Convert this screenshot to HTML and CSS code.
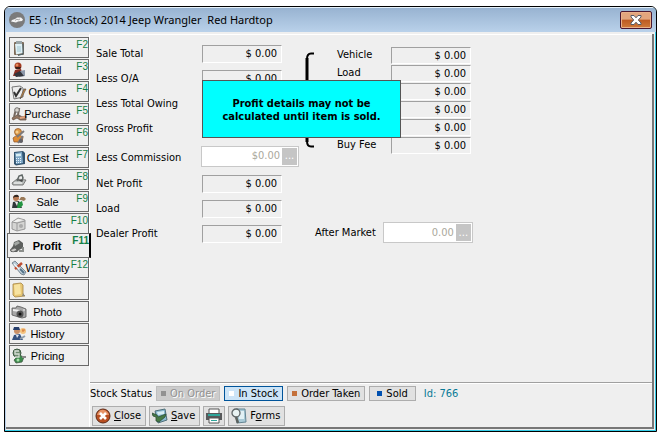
FILE: index.html
```html
<!DOCTYPE html>
<html lang="en">
<head>
<meta charset="utf-8">
<title>E5 : (In Stock) 2014 Jeep Wrangler Red Hardtop</title>
<link rel="stylesheet" href="styles.css">
</head>
<body>
<div class="window">
  <header class="titlebar">
    <svg class="logo" viewBox="0 0 16 16"><circle cx="8" cy="8" r="8" fill="#7b7b7b"/><path d="M2 9.500L3 8L6 7L8 5.500H12L14 7.500L13 9L9 9.500L7 10.500Z" fill="#f4f4f4"/><path d="M6 8.500L8 7L9 8L11 7" fill="none" stroke="#aaa"/></svg>
    <h1>E5 : (In Stock) 2014 Jeep Wrangler&nbsp; Red Hardtop</h1>
    <button class="win-close" aria-label="Close window"><svg viewBox="0 0 14 12"><path d="M2 1.500H5L7 3.800L9 1.500H12V3L9.300 6L12 9V10.500H9L7 8.200L5 10.500H2V9L4.700 6L2 3Z" fill="#fff" stroke="#555a66"/></svg></button>
  </header>
  <div class="body">
    <nav class="tabs">
      <button class="tab"><svg viewBox="0 0 16 16"><rect x="3" y="2" width="10" height="13" rx="1" fill="#7d6a58"/><path d="M4 4L11 3L12 13L5 14.500Z" fill="#dff0f5"/><rect x="5" y="1" width="6" height="3" fill="#9aa5a8"/><path d="M12 4V14L7 15.500" fill="none" stroke="#4d6670"/><path d="M6 7H10M6 9H10M6 11H10" stroke="#9fc4d0"/></svg><span>Stock</span><kbd>F2</kbd></button>
      <button class="tab"><svg viewBox="0 0 16 16"><circle cx="7" cy="4" r="3.500" fill="#a33a20"/><path d="M2 14L4 8L10 7L12 14Z" fill="#8b2f22"/><path d="M4 5H10L9 7H5Z" fill="#3a2018"/><path d="M9 9L14 8V14L8 15Z" fill="#8d98aa"/><path d="M3 12L9 9L13 14L5 15Z" fill="#33343b"/><circle cx="6" cy="3" r="1.500" fill="#e48a5a"/></svg><span>Detail</span><kbd>F3</kbd></button>
      <button class="tab"><svg viewBox="0 0 16 16"><path d="M1 3L9 2L12 4V13L3 15Z" fill="#eee" stroke="#777"/><path d="M3 8L5 12L10 4" fill="none" stroke="#333" stroke-width="2"/><path d="M15 5L11 13L9 15L10 12L13 5Z" fill="#c78640" stroke="#444" stroke-width=".6"/></svg><span>Options</span><kbd>F4</kbd></button>
      <button class="tab"><svg viewBox="0 0 16 16"><path d="M1 12L6 9L10 11L15 10V14L9 14L6 12L2 14Z" fill="#947763" stroke="#5d4638" stroke-width=".7"/><path d="M3 11L5 3L8 3L7 9L12 12" fill="none" stroke="#75685f" stroke-width="2"/><circle cx="6" cy="4" r="2.300" fill="#d8d3cc" stroke="#777"/><path d="M9 12L14 11" stroke="#e3a27c" stroke-width="2"/></svg><span>Purchase</span><kbd>F5</kbd></button>
      <button class="tab"><svg viewBox="0 0 16 16"><circle cx="7" cy="4" r="3.500" fill="#dd9a49" stroke="#8f501e" stroke-width=".7"/><path d="M2 10Q7 5 12 9L11 14H3Z" fill="#de8c34" stroke="#8b4d24" stroke-width=".7"/><path d="M6 9L13 3M7 15L12 8" stroke="#7c797a" stroke-width="2"/><circle cx="10" cy="13" r="2" fill="#5f6168"/><circle cx="6" cy="4" r="1.500" fill="#f4cf91"/></svg><span>Recon</span><kbd>F6</kbd></button>
      <button class="tab"><svg viewBox="0 0 16 16"><path d="M3 2L12 1L14 3V14L5 15.500L3 14Z" fill="#33546f"/><path d="M4 3L11 2L12 13L5 14Z" fill="#7fa8c7"/><path d="M5 4L10 3.500V6L5 6.500Z" fill="#d6edf3"/><path d="M5 8.500H11M5 10.500H11M5 12.500H11" stroke="#e7f4ff" stroke-dasharray="1 1"/></svg><span>Cost Est</span><kbd>F7</kbd></button>
      <button class="tab"><svg viewBox="0 0 16 16"><path d="M1 11L6 7L15 8L12 13L2 13Z" fill="#b9bdbb" stroke="#666" stroke-width=".8"/><path d="M6 9L8 4L11 3L12 6L10 10" fill="none" stroke="#5f6765" stroke-width="1.500"/><path d="M3 11L11 11" stroke="#fff"/><path d="M7 8L12 9" stroke="#444"/></svg><span>Floor</span><kbd>F8</kbd></button>
      <button class="tab"><svg viewBox="0 0 16 16"><circle cx="5" cy="4" r="3" fill="#b87952"/><path d="M2 4Q3 0 7 1L8 3L4 3Z" fill="#332821"/><path d="M1 14L2 8L8 7L11 14Z" fill="#30383a"/><path d="M7 9L11 7L12 11L9 14L6 14Z" fill="#239441"/><path d="M8 6L10 3L13 3L15 5L13 7L10 6Z" fill="#9a7a59"/><path d="M4 8L6 12L7 8Z" fill="#eee"/></svg><span>Sale</span><kbd>F9</kbd></button>
      <button class="tab"><svg viewBox="0 0 16 16"><path d="M1 6L7 2L14 4V13L6 15L1 13Z" fill="#d5d5d3" stroke="#888" stroke-width=".8"/><path d="M1 6L6 7L14 5M6 7V15" fill="none" stroke="#999"/><path d="M2 6L7 3L12 4L6 6Z" fill="#f3f3f1"/><circle cx="10" cy="10" r="2" fill="#aaa"/></svg><span>Settle</span><kbd>F10</kbd></button>
      <button class="tab active" aria-current="page"><svg viewBox="0 0 16 16"><path d="M1 12L4 8L5 4L10 2L14 5V10L10 12L8 14L2 14Z" fill="#5d605e"/><path d="M5 5L9 3L11 5L6 8Z" fill="#a3a7a4"/><path d="M1 12L6 10L8 12L4 14Z" fill="#cbcbc8" stroke="#555" stroke-width=".6"/><path d="M10 13L14 13V9" fill="none" stroke="#8b8e8b" stroke-width="2"/></svg><span>Profit</span><kbd>F11</kbd></button>
      <button class="tab"><svg viewBox="0 0 16 16"><path d="M1 3L4 1L15 12L13 15L10 14Z" fill="#b8c9d5" stroke="#65747f" stroke-width=".8"/><path d="M4 9L11 3" stroke="#bd4d31" stroke-width="2.500"/><path d="M3 4L11 12" stroke="#eef7fb" stroke-width="1.500"/><path d="M9 9L13 13" stroke="#557388" stroke-width="2"/></svg><span>Warranty</span><kbd>F12</kbd></button>
      <button class="tab"><svg viewBox="0 0 16 16"><path d="M2 2L10 1L12 3V12L14 14L4 15L2 13Z" fill="#e8c774" stroke="#a48442" stroke-width=".8"/><path d="M3 3L9 2L10 12L4 13Z" fill="#f7e3a1"/><path d="M12 11L14 14H11Z" fill="#8e8a7d"/></svg><span>Notes</span></button>
      <button class="tab"><svg viewBox="0 0 16 16"><path d="M1 4L5 4L6 2L10 3L15 5V13L11 14L1 11Z" fill="#a7a7a7" stroke="#555" stroke-width=".8"/><path d="M2 5L9 6V8L2 7Z" fill="#eee"/><circle cx="9" cy="10" r="3.500" fill="#555"/><circle cx="9" cy="10" r="1.500" fill="#111"/><path d="M12 6H14" stroke="#eee"/></svg><span>Photo</span></button>
      <button class="tab"><svg viewBox="0 0 16 16"><circle cx="6" cy="5" r="3" fill="#c99066"/><path d="M2 4L3 1L8 1L9 4Z" fill="#263e6c"/><path d="M1 14L3 9L9 8L12 14Z" fill="#35517f"/><path d="M5 9L6 12L8 9Z" fill="#dfe6ef"/><circle cx="12" cy="5" r="3" fill="#f3c27e"/><path d="M11 4H14M12 4V6" stroke="#d37536"/><path d="M9 13L14 10" stroke="#8d9ba9" stroke-width="2"/></svg><span>History</span></button>
      <button class="tab"><svg viewBox="0 0 16 16"><circle cx="6" cy="5" r="4" fill="#6e8a70" stroke="#3c5841"/><path d="M8 7L13 9L11 14L5 15L3 12Z" fill="#3b8a4b" stroke="#435b45" stroke-width=".8"/><path d="M8 3H4V6H8V9H4" fill="none" stroke="#d5ddd3" stroke-width="1.300"/><circle cx="7" cy="12" r="1.500" fill="#a9e0aa"/><path d="M11 9L15 9" stroke="#888" stroke-width="2"/></svg><span>Pricing</span></button>
    </nav>
    <main class="panel">
      <section class="content">
        <div class="form">
          <span>Sale Total</span><output>$ 0.00</output>
          <span>Less O/A</span><output>$ 0.00</output>
          <span>Less Total Owing</span><output>$ 0.00</output>
          <span>Gross Profit</span><output>$ 0.00</output>
          <label class="tall" for="commission">Less Commission</label>
          <div class="picker wide"><input id="commission" value="$0.00" disabled><button disabled aria-label="Choose commission">...</button></div>
          <span>Net Profit</span><output>$ 0.00</output>
          <span>Load</span><output>$ 0.00</output>
          <span>Dealer Profit</span><output>$ 0.00</output>
        </div>
        <div class="details">
          <div class="costs">
            <svg class="brace" viewBox="0 0 10 96" preserveAspectRatio="none"><path d="M9 1.500H6Q2 1.500 2 7V89Q2 94.500 6 94.500H9" fill="none" stroke="#000" stroke-width="2"/><path d="M2 6V90" stroke="#000" stroke-width="3"/></svg>
            <div class="cost-grid">
              <span>Vehicle</span><output>$ 0.00</output>
              <span>Load</span><output>$ 0.00</output>
              <span></span><output>$ 0.00</output>
              <span></span><output>$ 0.00</output>
              <span></span><output>$ 0.00</output>
              <span>Buy Fee</span><output>$ 0.00</output>
            </div>
          </div>
          <div class="after"><label for="after">After Market</label><div class="picker"><input id="after" value="0.00" disabled><button disabled aria-label="Choose after market">...</button></div></div>
        </div>
        <div class="notice" role="status">Profit details may not be<br>calculated until item is sold.</div>
      </section>
      <footer class="footer">
        <div class="status">
          <span class="status-label">Stock Status</span>
          <button class="state off" disabled><i></i>On Order</button>
          <button class="state on"><i></i>In Stock</button>
          <button class="state taken"><i></i>Order Taken</button>
          <button class="state sold"><i></i>Sold</button>
          <span class="id">Id: 766</span>
        </div>
        <div class="actions">
          <button><svg viewBox="0 0 16 16"><circle cx="8" cy="8" r="7" fill="#b84e20" stroke="#5b2a18"/><path d="M2 7Q4 1 9 2Q13 3 14 7Z" fill="#e69366"/><path d="M5 5L11 11M11 5L5 11" stroke="#fff" stroke-width="2.600"/></svg><span><u>C</u>lose</span></button>
          <button><svg viewBox="0 0 16 16"><path d="M3 3L13 1L15 12L6 15Z" fill="#89b9d0" stroke="#4e6e78"/><path d="M5 4L12 3V6L6 7Z" fill="#d7edf3"/><path d="M0 5L5 7L6 9L14 6L13 9L7 14L4 13L4 9L1 8Z" fill="#467a45" stroke="#2d4f38" stroke-width=".8"/></svg><span><u>S</u>ave</span></button>
          <button class="print" aria-label="Print"><svg viewBox="0 0 16 16"><path d="M3 1H13V6H3Z" fill="#fff" stroke="#555"/><path d="M0 5H16V12H0Z" fill="#58595b"/><path d="M2 6H14V8H2Z" fill="#2fa69b"/><path d="M3 10H13V15H3Z" fill="#fff" stroke="#555"/><path d="M5 12.500H11" stroke="#2fa69b"/></svg></button>
          <button><svg viewBox="0 0 16 16"><path d="M5 1L14 1L15 14L6 15Z" fill="#a9cad7" stroke="#648593"/><path d="M8 3H13V11H8Z" fill="#e2f1f5"/><circle cx="5" cy="5" r="4" fill="#e9f3f3" stroke="#5d6466" stroke-width="1.300"/><path d="M5 9L7 15" stroke="#5c625f" stroke-width="2.500"/></svg><span>F<u>o</u>rms</span></button>
        </div>
      </footer>
    </main>
  </div>
</div>
</body>
</html>
```
FILE: styles.css
```css
* { box-sizing: border-box; }
body {
  margin: 0;
  padding: 6px 5px 6px 4px;
  min-height: 100vh;
  display: flex;
  background: #fff;
  color: #000;
  font: 11px/14px "DejaVu Sans Condensed", "DejaVu Sans", sans-serif;
}
button, input { font: inherit; color: inherit; margin: 0; border-radius: 0; }
svg { display: block; }
.window {
  flex: 1;
  display: flex;
  flex-direction: column;
  border: 1px solid #000;
  border-radius: 6px 6px 0 0;
  background: #efefef;
  box-shadow: inset -1px -1px #35cde8, inset 1px 0 #b9d1ea;
  overflow: hidden;
}
.titlebar {
  display: flex;
  align-items: center;
  gap: 4px;
  height: 25px;
  padding: 0 4px;
  background: linear-gradient(#98b3d1, #b9d1ea);
  border-top: 1px solid #e6f2fb;
}
.logo { width: 16px; height: 16px; }
h1 {
  flex: 1;
  margin: 0;
  font: 11px/16px "Noto Sans", sans-serif;
}
.win-close {
  width: 32px;
  height: 18px;
  padding: 0;
  display: grid;
  place-items: center;
  border: 1px solid #4a1730;
  border-radius: 2px;
  background: linear-gradient(#e2a57d 45%, #bd5a22 50%, #d07a3a);
  box-shadow: inset 0 0 0 1px #e8b08a;
}
.win-close svg { width: 14px; height: 12px; }
.body {
  flex: 1;
  display: flex;
  margin: 2px 2px 2px 1px;
  border-right: 2px solid #777;
  border-bottom: 2px solid #777;
}
.tabs {
  display: flex;
  flex-direction: column;
  gap: 1px;
  width: 83px;
  padding: 3px 0 0 3px;
}
.tab {
  display: grid;
  align-items: center;
  width: 80px;
  height: 21px;
  padding: 0 0 0 1px;
  border: 1px solid #696969;
  background: #efefef;
  font: 11px/14px "Liberation Sans", sans-serif;
}
.tab > * { grid-area: 1 / 1; }
.tab svg { width: 16px; height: 16px; }
.tab span { padding-right: 4px; text-align: center; }
.tab kbd {
  justify-self: end;
  align-self: start;
  font: 10px/14px "Liberation Sans", sans-serif;
  color: #138045;
}
.active {
  width: 84px;
  height: 25px;
  margin: -2px;
  border-right: 2px solid #000;
  position: relative;
  z-index: 1;
  font-weight: bold;
}
.active kbd { font-weight: bold; }
.panel {
  flex: 1;
  display: flex;
  flex-direction: column;
  border-left: 1px solid #fff;
  border-top: 1px solid #fff;
}
.content {
  flex: 1;
  display: flex;
  gap: 23px;
  padding: 6px;
  position: relative;
}
.form {
  width: 186px;
  display: grid;
  grid-template-columns: 106px 80px;
  grid-template-rows: repeat(4, 25px) 30px repeat(3, 25px);
  align-items: center;
}
.tall { padding-top: 4px; }
output {
  height: 18px;
  padding: 0 4px;
  border: 1px solid;
  border-color: #a0a0a0 #fff #fff #a0a0a0;
  line-height: 16px;
  text-align: right;
}
.picker {
  display: flex;
  width: 90px;
  height: 21px;
  padding: 1px;
  border: 1px solid #c8c8c8;
  background: #fff;
}
.wide { width: 98px; margin-left: -1px; }
.picker input {
  flex: 1;
  min-width: 0;
  padding: 0 2px;
  border: 0;
  background: #fff;
  color: #aaa89c;
  text-align: right;
}
.picker button {
  width: 15px;
  padding: 0;
  border: 0;
  background: #c5c5c5;
  color: #fff;
}
.details {
  display: flex;
  flex-direction: column;
  justify-content: space-between;
  height: 204px;
  padding-top: 5px;
}
.costs { display: flex; gap: 22px; }
.brace { width: 10px; height: 96px; margin-top: 6px; }
.cost-grid {
  display: grid;
  grid-template-columns: 54px 80px;
  grid-auto-rows: 18px;
  align-items: center;
}
.cost-grid output { height: 17px; line-height: 15px; }
.after {
  display: flex;
  align-items: center;
  gap: 7px;
  padding-left: 10px;
  height: 25px;
}
.notice {
  position: absolute;
  left: 112px;
  top: 45px;
  width: 199px;
  height: 58px;
  padding-top: 16px;
  border: 1px solid #555;
  background: #0ff;
  font-weight: bold;
  line-height: 13px;
  text-align: center;
}
.footer {
  border-top: 1px solid #a0a0a0;
  box-shadow: inset 0 1px #fff;
  padding: 3px 0 1px;
}
.status, .actions { display: flex; align-items: center; }
.status { gap: 4px; }
.state {
  display: flex;
  align-items: center;
  gap: 4px;
  height: 15px;
  padding: 0 4px;
  border: 1px solid #adadad;
  background: #e1e1e1;
  line-height: 13px;
}
.state i { width: 5px; height: 5px; background: #fff; }
.off { background: #ccc; border-color: #bfbfbf; color: #929292; text-shadow: 1px 1px #fff; }
.off i { background: #929292; }
.on { background: #cce4f7; border-color: #00549a; }
.taken i { background: #c4703a; }
.sold { padding: 0 7px; }
.sold i { background: #0050b0; }
.id { margin-left: 4px; color: #087a96; }
.actions { gap: 3px; padding: 5px 2px 0; }
.actions button {
  display: flex;
  align-items: center;
  gap: 3px;
  height: 20px;
  padding: 0 4px 0 2px;
  border: 1px solid #adadad;
  background: #e1e1e1;
}
.actions svg { width: 16px; height: 16px; }
.actions .print { padding: 0 2px; }
```
